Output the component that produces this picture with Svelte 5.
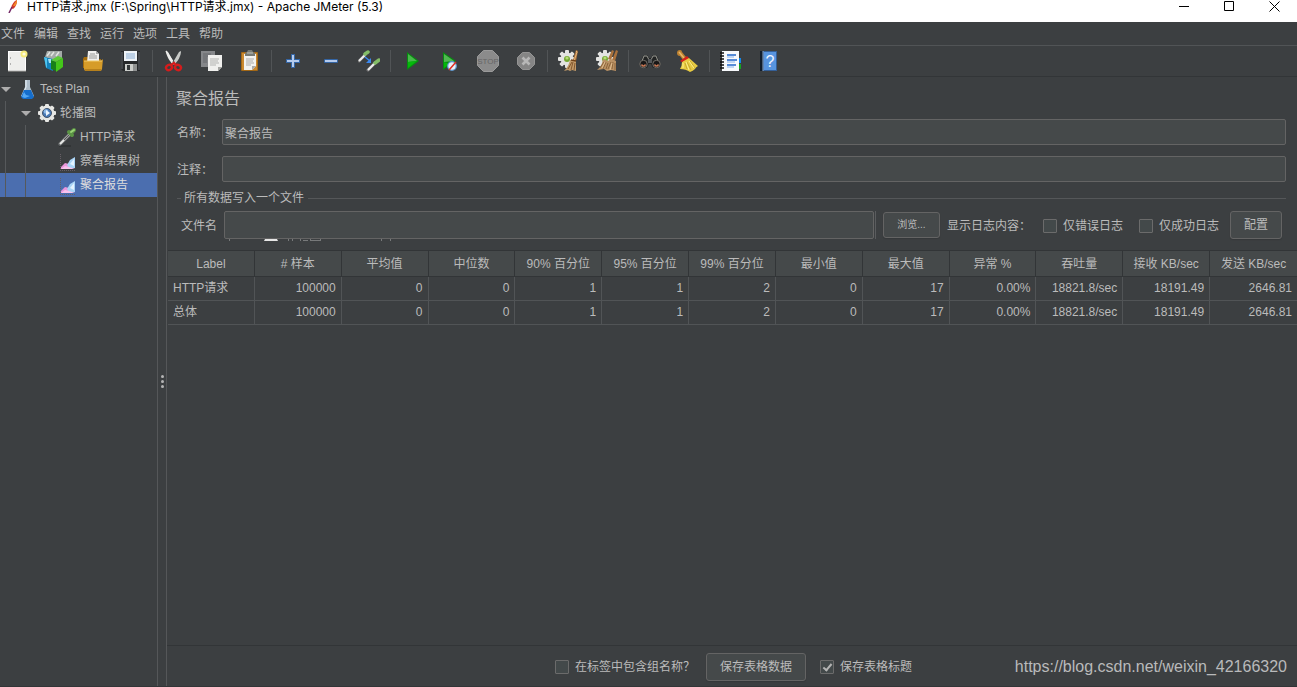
<script lang="ts">
  type Row = { label: string; values: string[] };

  const menus = ["文件", "编辑", "查找", "运行", "选项", "工具", "帮助"];

  /** Toolbar buttons, one array per separated group. */
  const toolGroups = [
    ["new", "templates", "open", "save"],
    ["cut", "copy", "paste"],
    ["expand", "collapse", "toggle"],
    ["start", "start-no-pauses", "stop", "shutdown"],
    ["clear", "clear-all"],
    ["search", "reset-search"],
    ["function-helper", "help"],
  ];

  const tree = [
    { name: "Test Plan", icon: "flask", depth: 0, open: true },
    { name: "轮播图", icon: "gear", depth: 1, open: true },
    { name: "HTTP请求", icon: "dropper", depth: 2, open: false },
    { name: "察看结果树", icon: "graph", depth: 2, open: false },
    { name: "聚合报告", icon: "graph", depth: 2, open: false },
  ];

  const columns = [
    "Label",
    "# 样本",
    "平均值",
    "中位数",
    "90% 百分位",
    "95% 百分位",
    "99% 百分位",
    "最小值",
    "最大值",
    "异常 %",
    "吞吐量",
    "接收 KB/sec",
    "发送 KB/sec",
  ];

  const stats = ["100000", "0", "0", "1", "1", "2", "0", "17", "0.00%", "18821.8/sec", "18191.49", "2646.81"];
  const rows: Row[] = [
    { label: "HTTP请求", values: stats },
    { label: "总体", values: stats },
  ];

  let selected = $state(4);
  let name = $state("聚合报告");
  let comment = $state("");
  let filename = $state("");
  let onlyErrors = $state(false);
  let onlySuccess = $state(false);
  let includeGroup = $state(false);
  let saveHeader = $state(true);
</script>

{#snippet gearShape()}
  <g fill="#e4e4e2">
    <circle cx="9" cy="9" r="6.5" />
    {#each [0, 45, 90, 135] as a}
      <rect x="7" y="0" width="4" height="18" rx="1" transform="rotate({a} 9 9)" />
    {/each}
  </g>
  <circle cx="9" cy="9" r="3" fill="#73a832" />
  <circle cx="9" cy="8" r="1.6" fill="#b8dc75" />
{/snippet}

{#snippet icon(id: string)}
  <svg width="22" height="22" viewBox="0 0 22 22" aria-hidden="true">
    {#if id === "new"}
      <rect x="2.5" y="1.5" width="17" height="19" fill="#eeeeec" stroke="#fff" />
      <path d="M2 21h18" stroke="#a9a9a6" />
      <path d="M4 8h1M4 14h1" stroke="#777" />
      <circle cx="18" cy="4" r="3.5" fill="#f5ea7c" />
      <circle cx="18" cy="4" r="1.6" fill="#fffce0" />
    {:else if id === "templates"}
      <path d="M1 7l2-6 5 0 2 0 3 0 5 0 0 7-8 3z" fill="#a4aaa8" />
      <path d="M3 6l3-4M7 6l3-4M12 6l3-4" stroke="#e2e4e2" stroke-width="1.5" />
      <path d="M0 7l9 2v12l-7-3z" fill="#1483bd" />
      <path d="M0 7l3 1v10l-1-1z" fill="#4fc5ef" />
      <path d="M4 9h3v4H5z" fill="#a8e0f4" />
      <path d="M7 10l5 2v9l-5-2z" fill="#188018" />
      <path d="M12 12l7-4v9l-7 5z" fill="#44c61a" />
      <path d="M7 10l7-4 5 2-7 4z" fill="#5ccb36" />
    {:else if id === "open"}
      <path d="M1 9l1-2h4l2 2h11v9H1z" fill="#a66d0c" />
      <path d="M6 1h8l3 3v9H5z" fill="#f0f0ee" />
      <path d="M14 1l3 3h-3z" fill="#aaa" />
      <path d="M8 4h5M7 6h8M7 8h8" stroke="#9a9a98" />
      <path d="M2 11h17l2-2-1 10-1 2H3l-1-2z" fill="#d69c29" />
      <path d="M2 11h18" stroke="#f1ca68" />
      <path d="M3 20h16" stroke="#966510" />
    {:else if id === "save"}
      <path d="M1 1h19v20H3l-2-2z" fill="#27292b" />
      <path d="M2 2v17M19 2v18" stroke="#60656a" fill="none" />
      <rect x="4" y="1" width="13" height="10" fill="#eef3f8" />
      <path d="M6 4h9M6 6h9M6 8h9" stroke="#8caed4" />
      <rect x="5" y="14" width="12" height="7" fill="#cbcdca" />
      <rect x="7" y="15" width="3" height="5" fill="#34383a" />
      <path d="M13 14h4v7h-4z" fill="#8f9191" />
    {:else if id === "cut"}
      <path d="M3 1l2 1 7 12-2 1C7 11 3 6 3 1z" fill="#ececea" />
      <path d="M3 1l8 13" stroke="#ececea" stroke-width="1.5" />
      <path d="M18 1l-2 1-7 12 2 1c4-4 7-9 7-14z" fill="#c8cac7" />
      <circle cx="10.5" cy="12" r="1" fill="#555" />
      <g fill="none" stroke="#d41c1c" stroke-width="2.4">
        <ellipse cx="6" cy="17.5" rx="3" ry="2.6" transform="rotate(-30 6 17.5)" />
        <ellipse cx="15" cy="17.5" rx="3" ry="2.6" transform="rotate(30 15 17.5)" />
        <path d="M8 15l3-2 2 2" />
      </g>
    {:else if id === "copy"}
      <path d="M0 1h14v16H0z" fill="#85878a" />
      <path d="M2 4h8M2 6h8M2 8h4M2 10h4M2 12h4" stroke="#64666a" />
      <path d="M7 5h14v12l-4 4H7z" fill="#f0f0ee" />
      <path d="M17 21v-4h4z" fill="#a4a5a2" />
      <path d="M9 9h9M9 11h8M9 13h9M9 15h6" stroke="#b2b3b1" />
    {:else if id === "paste"}
      <rect x="2" y="2" width="17" height="19" rx="1" fill="#a36816" />
      <rect x="3" y="3" width="15" height="17" fill="#ca8930" />
      <path d="M5 4h12v12l-4 4H5z" fill="#f2f2f0" />
      <path d="M13 20v-4h4z" fill="#aaa" />
      <path d="M7 9h8M7 11h7M7 13h8M7 15h5" stroke="#aaa" />
      <path d="M6 3l2-1 1-2h4l1 2 2 1v3H6z" fill="#777a75" />
      <path d="M8 3h6" stroke="#c2c3bd" />
    {:else if id === "expand"}
      <path d="M9 4h4v5h5v4h-5v5H9v-5H4V9h5z" fill="#3465a4" />
      <path d="M10 5h2v5h5v2h-5v5h-2v-5H5v-2h5z" fill="#b5cbed" />
    {:else if id === "collapse"}
      <rect x="4" y="9" width="14" height="4" rx="1" fill="#3465a4" />
      <rect x="5" y="10" width="12" height="2" fill="#b5cbed" />
    {:else if id === "toggle"}
      <path d="M1 11l6-6M10 20l7-7" stroke="#777" stroke-width="3" stroke-linecap="round" />
      <path d="M1 11l6-6M10 20l7-7" stroke="#eee" stroke-width="2" />
      <path d="M7 4l3-2M17 13l4-3" stroke="#84bd68" stroke-width="3.5" stroke-linecap="round" />
      <path d="M7 7l5 4" stroke="#3b89f1" stroke-width="1.4" />
      <path d="M13 8v5H8z" fill="#3b89f1" />
    {:else if id === "start"}
      <path d="M6 2l12 9-12 9z" fill="#078c10" />
      <path d="M7 4l9 7-9 1z" fill="#49ba4b" />
      <path d="M7 12l9-1-9 7z" fill="#04ba0a" />
    {:else if id === "start-no-pauses"}
      <path d="M4 2l13 9-13 9z" fill="#078c10" />
      <path d="M5 4l10 7-10 1z" fill="#50b951" />
      <path d="M5 12l6 2-6 4z" fill="#04b90a" />
      <circle cx="13" cy="16" r="4.3" fill="#e7f1fa" stroke="#5e97ce" stroke-width="1.2" />
      <path d="M10 20l7-8" stroke="#e02c20" stroke-width="1.5" />
    {:else if id === "stop"}
      <path d="M6.5 .5h9l6 6v9l-6 6h-9l-6-6v-9z" fill="#8b8b8b" stroke="#9a9a9a" />
      <text x="11" y="14" text-anchor="middle" font-size="8" fill="#666">STOP</text>
    {:else if id === "shutdown"}
      <path d="M7.5 2.5h7l5 5v7l-5 5h-7l-5-5v-7z" fill="#858585" stroke="#949494" />
      <path d="M7.5 7.5l7 7M14.5 7.5l-7 7" stroke="#b7b7b7" stroke-width="2.6" />
    {:else if id === "clear"}
      {@render gearShape()}
      <path d="M18 0l2 1-2 10-3-1z" fill="#b3773d" />
      <path d="M18 1l1 1-3 9" stroke="#e1b47e" fill="none" />
      <path d="M12 10l6 1v10l-4-1-2 1-2-1-4 1c4-4 5-7 6-11z" fill="#c19a69" />
      <path d="M14 12l-4 7M15 12l-2 8M17 13l-1 7" stroke="#84572d" />
      <path d="M13 10l5 1" stroke="#704016" stroke-width="1.5" />
    {:else if id === "clear-all"}
      {@render gearShape()}
      <path d="M16 0l2 1-3 9-3-1zM20 0l2 1-3 10-3-1z" fill="#a9713c" />
      <path d="M7 9l5 2 3-2 5 2v10l-5-1-4 1-3-2-7 1c4-3 5-6 6-11z" fill="#b99164" />
      <path d="M8 12l-4 6M10 12l-3 7M12 13l-2 6M15 12l-3 7M17 12l-1 7M19 13v7" stroke="#8d653b" />
      <path d="M9 12l-3 6M16 13l-2 7" stroke="#e0be91" />
    {:else if id === "search"}
      <path d="M4 6l4-1 2 3h2l2-3 4 1 3 8-3 4h-4l-2-4h-2l-2 4H4l-3-4z" fill="#222424" />
      <path d="M3 11l2-5 3 0 2 4M19 11l-2-5-3 0-2 4" stroke="#96968f" fill="none" />
      <path d="M9 9h4v4H9z" fill="#55585a" />
      <circle cx="4.5" cy="14" r="3.7" fill="#181616" stroke="#75716a" />
      <circle cx="17.5" cy="14" r="3.7" fill="#181616" stroke="#75716a" />
      <path d="M2.5 14.5q2 3 4 0M15.5 14.5q2 3 4 0" stroke="#cc7a56" stroke-width="1.5" fill="none" />
    {:else if id === "reset-search"}
      <path d="M0 3q0-3 3-3 2 0 2 2l4 5-3 3-3-4q-3 0-3-3z" fill="#bd8231" />
      <path d="M2 2l5 6" stroke="#e8b767" stroke-width="1.5" />
      <path d="M9 8l3 0 9 8q-2 1-3 3-2 2-5 3-4-3-10-3 2-3 2-7z" fill="#e8cb42" />
      <path d="M8 13l2 6M10 12l4 8M13 11l5 7" stroke="#c8aa2c" />
      <path d="M6 13v5M9 12l3 8M12 11l5 7" stroke="#fff08c" />
      <path d="M3 11l7-5 2 2-7 4z" fill="#d9201a" />
    {:else if id === "function-helper"}
      <path d="M2 1h17v20H2z" fill="#f7f9fc" />
      <path d="M7 5h9M7 10h10M7 15h9" stroke="#2367ca" stroke-width="1.5" />
      <path d="M7 7h7M7 12h8M7 17h7" stroke="#8ab4ed" />
      <path d="M0 3h4M0 6h4M0 9h4M0 12h4M0 15h4M0 18h4" stroke="#111" stroke-width="1.3" />
      <path d="M19 8h2v5h-2z" fill="#1387e8" />
      <path d="M19 14h2v5h-2z" fill="#15a222" />
    {:else if id === "help"}
      <path d="M2 1h17v20H2z" fill="#345f98" />
      <path d="M6 2h12v18H6z" fill="#5794e0" />
      <path d="M2 1h3v20H2z" fill="#111d2c" />
      <path d="M5 1v20" stroke="#8aaad0" />
      <text x="12" y="17" text-anchor="middle" font-size="16" fill="#eef5ff">?</text>
    {:else if id === "flask"}
      <path d="M8 2h5v7l4 9-2 2H6l-2-2 4-9z" fill="#aebdca" />
      <path d="M9 2v7l-4 9" stroke="#edf5fa" fill="none" />
      <path d="M7 12h7l3 7-2 2H6l-2-2z" fill="#146dcc" />
      <path d="M7 14l2 3 4 1-5 2-3-1z" fill="#53a7f3" />
    {:else if id === "gear"}
      <g fill="#e7e7e4">
        <circle cx="10" cy="11" r="7.5" />
        {#each [0, 45, 90, 135] as a}
          <rect x="8" y="2" width="4" height="18" rx="1" transform="rotate({a} 10 11)" />
        {/each}
      </g>
      <circle cx="10" cy="11" r="4.5" fill="#4a79b4" stroke="#41536b" />
      <circle cx="9" cy="9.5" r="2.3" fill="#8fb9e7" />
      <path d="M9 8l4 3-4 3z" fill="#edf5fd" />
    {:else if id === "dropper"}
      <path d="M2 20h12" stroke="#292c2d" />
      <path d="M3 18L13 8" stroke="#686b6c" stroke-width="3.5" stroke-linecap="round" />
      <path d="M3 18L13 8" stroke="#e8eae8" stroke-width="2" />
      <path d="M7 14l5-5" stroke="#555" stroke-width="1.2" />
      <path d="M12 6l3 3M14 7l3-3" stroke="#5b9445" stroke-width="4" stroke-linecap="round" />
      <path d="M14 6l3-2" stroke="#9bd577" stroke-width="2" stroke-linecap="round" />
    {:else if id === "graph"}
      <path d="M3.5 4v16M3 20.5h16" stroke="#665f66" stroke-dasharray="1 1" />
      <path d="M4 17l4-4 4 1 0 5H4z" fill="#eb96dc" />
      <path d="M10 15l3-5 5-3v11h-6z" fill="#a9d4f6" />
      <path d="M13 14l4-5 0 7z" fill="#e4f3ff" />
      <path d="M4 19l4-3 4 1 6 2H4z" fill="#f8c3ee" />
    {/if}
  </svg>
{/snippet}

<div class="app">
  <header class="titlebar">
    <svg class="feather" width="12" height="13" viewBox="0 0 12 13" aria-hidden="true">
      <path d="M10 0C7 1 5 4 4 8l2 1c3-2 4-6 4-9z" fill="#d3382a" />
      <path d="M10 0C8 2 7 4 6 6l2 0c2-2 2-4 2-6z" fill="#f18928" />
      <path d="M5 7l-3 6" stroke="#742866" stroke-width="1.5" />
    </svg>
    <span class="title">HTTP请求.jmx (F:\Spring\HTTP请求.jmx) - Apache JMeter (5.3)</span>
    <button class="win-btn" type="button" aria-label="Minimize">
      <svg width="11" height="11" viewBox="0 0 11 11"><path d="M0 5.5h10" /></svg>
    </button>
    <button class="win-btn" type="button" aria-label="Maximize">
      <svg width="11" height="11" viewBox="0 0 11 11"><path d="M.5 .5h9v9h-9z" /></svg>
    </button>
    <button class="win-btn" type="button" aria-label="Close">
      <svg width="11" height="11" viewBox="0 0 11 11"><path d="M.5 .5l10 10M10.5 .5l-10 10" /></svg>
    </button>
  </header>

  <nav class="menubar">
    {#each menus as menu}
      <button type="button">{menu}</button>
    {/each}
  </nav>

  <div class="toolbar" role="toolbar">
    {#each toolGroups as group, i}
      {#if i > 0}<span class="tool-sep"></span>{/if}
      {#each group as tool}
        <button type="button" aria-label={tool} disabled={tool === "stop" || tool === "shutdown"}>
          {@render icon(tool)}
        </button>
      {/each}
    {/each}
  </div>

  <div class="body">
    <aside class="tree" role="tree">
      {#each tree as node, i}
        <button
          type="button"
          class="node"
          class:selected={selected === i}
          role="treeitem"
          aria-selected={selected === i}
          onclick={() => (selected = i)}
        >
          {#each { length: node.depth } as _}
            <span class="guide"></span>
          {/each}
          {#if node.depth < 2}
            <span class="arrow" class:open={node.open}></span>
          {:else}
            <span class="no-arrow"></span>
          {/if}
          {@render icon(node.icon)}
          <span class="node-name">{node.name}</span>
        </button>
      {/each}
    </aside>

    <div class="splitter"><i></i><i></i><i></i></div>

    <main class="panel">
      <h1>聚合报告</h1>

      <div class="field-row">
        <label for="name">名称：</label>
        <input id="name" type="text" bind:value={name} />
      </div>
      <div class="field-row">
        <label for="comment">注释：</label>
        <input id="comment" type="text" bind:value={comment} />
      </div>

      <fieldset>
        <legend>所有数据写入一个文件</legend>
        <div class="file-row">
          <label for="filename">文件名</label>
          <div class="file-field">
            <input id="filename" type="text" bind:value={filename} />
            <!-- leftover repaint strip under the field -->
            <svg class="residue" width="180" height="3" viewBox="0 0 180 3" aria-hidden="true">
              <path d="M41 0h12l1 2H40z" fill="#e6e6e6" />
              <path
                d="M5.5 0v2M64.5 0v2M68.5 0v2M76.5 0v2M79 1.5h5M86.5 0v2M96.5 0v2M86 1.5h10M157.5 0v2M166.5 0v2"
                stroke="#77797a"
                fill="none"
              />
            </svg>
          </div>
          <button class="btn browse" type="button">浏览...</button>
          <span class="log-label">显示日志内容：</span>
          <label class="check"><input type="checkbox" bind:checked={onlyErrors} />仅错误日志</label>
          <label class="check second"><input type="checkbox" bind:checked={onlySuccess} />仅成功日志</label>
          <button class="btn configure" type="button">配置</button>
        </div>
      </fieldset>

      <div class="table-wrap">
        <table>
          <thead>
            <tr>
              {#each columns as column}
                <th scope="col">{column}</th>
              {/each}
            </tr>
          </thead>
          <tbody>
            {#each rows as row}
              <tr>
                <td class="row-label">{row.label}</td>
                {#each row.values as value}
                  <td>{value}</td>
                {/each}
              </tr>
            {/each}
          </tbody>
        </table>
      </div>

      <footer>
        <label class="check"><input type="checkbox" bind:checked={includeGroup} />在标签中包含组名称？</label>
        <button class="btn save" type="button">保存表格数据</button>
        <label class="check"><input type="checkbox" bind:checked={saveHeader} />保存表格标题</label>
        <span class="watermark">https://blog.csdn.net/weixin_42166320</span>
      </footer>
    </main>
  </div>
</div>

<style>
  :global(body) {
    margin: 0;
    background: #3c3f41;
  }

  .app {
    display: flex;
    flex-direction: column;
    min-height: 100vh;
    box-sizing: border-box;
    background: #3c3f41;
    color: #bbbbbb;
    font-family: "Liberation Sans", "Noto Sans CJK SC", sans-serif;
    font-size: 12px;
    line-height: 16px;
    border-bottom: 1px solid #323537;
  }

  button,
  input {
    font: inherit;
    color: inherit;
    margin: 0;
    box-sizing: border-box;
  }

  button {
    padding: 0;
    border: 0;
    background: none;
    white-space: nowrap;
  }

  svg {
    display: block;
    flex-shrink: 0;
  }

  .titlebar {
    display: flex;
    align-items: flex-start;
    height: 22px;
    background: #ffffff;
    color: #000000;
  }

  .feather {
    margin-left: 7px;
  }

  .title {
    flex: 1;
    margin-left: 8px;
    font-family: Inter, "Noto Sans CJK SC", sans-serif;
    line-height: 14px;
    white-space: nowrap;
  }

  .win-btn {
    display: flex;
    justify-content: center;
    width: 45px;
    padding-top: 1px;
  }

  .win-btn path {
    fill: none;
    stroke: #000000;
  }

  .menubar {
    display: flex;
    gap: 9px;
    height: 23px;
    padding-left: 1px;
    border-bottom: 1px solid #515456;
  }

  .toolbar {
    display: flex;
    align-items: center;
    gap: 4px;
    height: 30px;
    border-bottom: 1px solid #323537;
  }

  .toolbar button {
    display: flex;
    justify-content: center;
    width: 34px;
  }

  .tool-sep {
    width: 1px;
    height: 22px;
    background: #515456;
  }

  .body {
    flex: 1;
    display: flex;
  }

  .tree {
    width: 157px;
    border-right: 1px solid #555759;
  }

  .node {
    display: flex;
    align-items: center;
    width: 100%;
    height: 24px;
    text-align: left;
  }

  .node.selected {
    background: #4b6eaf;
  }

  .guide {
    align-self: stretch;
    width: 14px;
    margin-left: 5px;
    border-left: 1px solid #56595b;
  }

  .arrow,
  .no-arrow {
    width: 10px;
    margin: 0 6px 0 1px;
  }

  .arrow.open::before {
    content: "";
    display: block;
    width: 0;
    border: 5px solid transparent;
    border-top-color: #adadad;
    border-bottom: 0;
  }

  .node-name {
    margin-left: 1px;
    line-height: 18px;
  }

  .selected .node-name {
    color: #dddddd;
  }

  .splitter {
    display: flex;
    flex-direction: column;
    align-items: center;
    justify-content: center;
    gap: 2px;
    width: 8px;
    border-right: 1px solid #555759;
  }

  .splitter i {
    width: 3px;
    height: 3px;
    border-radius: 50%;
    background: #b4b4b4;
  }

  .panel {
    flex: 1;
    min-width: 0;
    display: flex;
    flex-direction: column;
  }

  h1 {
    margin: 0 0 8px 9px;
    padding-top: 10px;
    font-size: 16px;
    font-weight: 400;
    line-height: 24px;
  }

  .field-row {
    display: flex;
    align-items: center;
    margin: 0 11px 11px 10px;
  }

  .field-row label,
  .file-row > label,
  .log-label {
    padding-top: 2px;
  }

  .field-row label {
    width: 45px;
    white-space: nowrap;
  }

  input[type="text"] {
    flex: 1;
    min-width: 0;
    height: 26px;
    padding: 0 2px;
    border: 1px solid #646464;
    border-radius: 2px;
    background: #45494a;
    outline: none;
  }

  fieldset {
    min-width: 0;
    margin: -3px 11px 0 10px;
    padding: 5px 4px 11px 4px;
    border: 0 solid #555759;
    border-top-width: 1px;
  }

  legend {
    padding: 0 4px 0 3px;
    line-height: 16px;
  }

  .file-row {
    display: flex;
    align-items: center;
    white-space: nowrap;
  }

  .file-field {
    position: relative;
    flex: 1;
    display: flex;
    min-width: 0;
    margin: 0 7px;
    padding-right: 1px;
    border-right: 1px solid #5a5c5e;
  }

  .file-row input[type="text"] {
    height: 28px;
  }

  .residue {
    position: absolute;
    top: 100%;
    left: 0;
  }

  .btn {
    border: 1px solid #646464;
    border-radius: 3px;
    background: #45494a;
    box-shadow: 0 1px 1px #35383a;
  }

  .browse {
    width: 57px;
    height: 26px;
    font-size: 10px;
  }

  .configure {
    width: 52px;
    height: 28px;
    margin-left: 11px;
  }

  .log-label {
    margin: 0 12px 0 7px;
  }

  .check {
    display: flex;
    align-items: center;
    gap: 6px;
    white-space: nowrap;
  }

  .second {
    margin-left: 16px;
  }

  .check input {
    appearance: none;
    display: grid;
    place-items: center;
    width: 14px;
    height: 14px;
    border: 1px solid #6b6b6b;
    border-radius: 1px;
    background: #43494a;
  }

  .check input:checked::before {
    content: "";
    width: 3px;
    height: 7px;
    margin-bottom: 2px;
    border: solid #b4b4b4;
    border-width: 0 2px 2px 0;
    transform: rotate(40deg);
  }

  .table-wrap {
    flex: 1;
    padding-left: 1px;
    border-bottom: 1px solid #323537;
  }

  table {
    width: 100%;
    table-layout: fixed;
    border-collapse: separate;
    border-spacing: 0;
  }

  th,
  td {
    box-sizing: border-box;
    overflow: hidden;
    white-space: nowrap;
    font-weight: 400;
  }

  th {
    height: 27px;
    padding: 0;
    border: solid #323537;
    border-width: 1px 1px 1px 0;
    background: #45494a;
    text-align: center;
  }

  td {
    height: 24px;
    padding: 0 5px 2px;
    border: solid #515456;
    border-width: 0 1px 1px 0;
    text-align: right;
  }

  th:last-child,
  td:last-child {
    border-right: 0;
  }

  td.row-label {
    text-align: left;
  }

  footer {
    position: relative;
    display: flex;
    align-items: center;
    justify-content: center;
    box-sizing: border-box;
    height: 40px;
    padding: 2px 0 0 3px;
  }

  .save {
    width: 100px;
    height: 28px;
    margin: 0 14px 0 11px;
  }

  .watermark {
    position: absolute;
    right: 10px;
    font-size: 16px;
    line-height: 18px;
    color: #b9babb;
  }
</style>
